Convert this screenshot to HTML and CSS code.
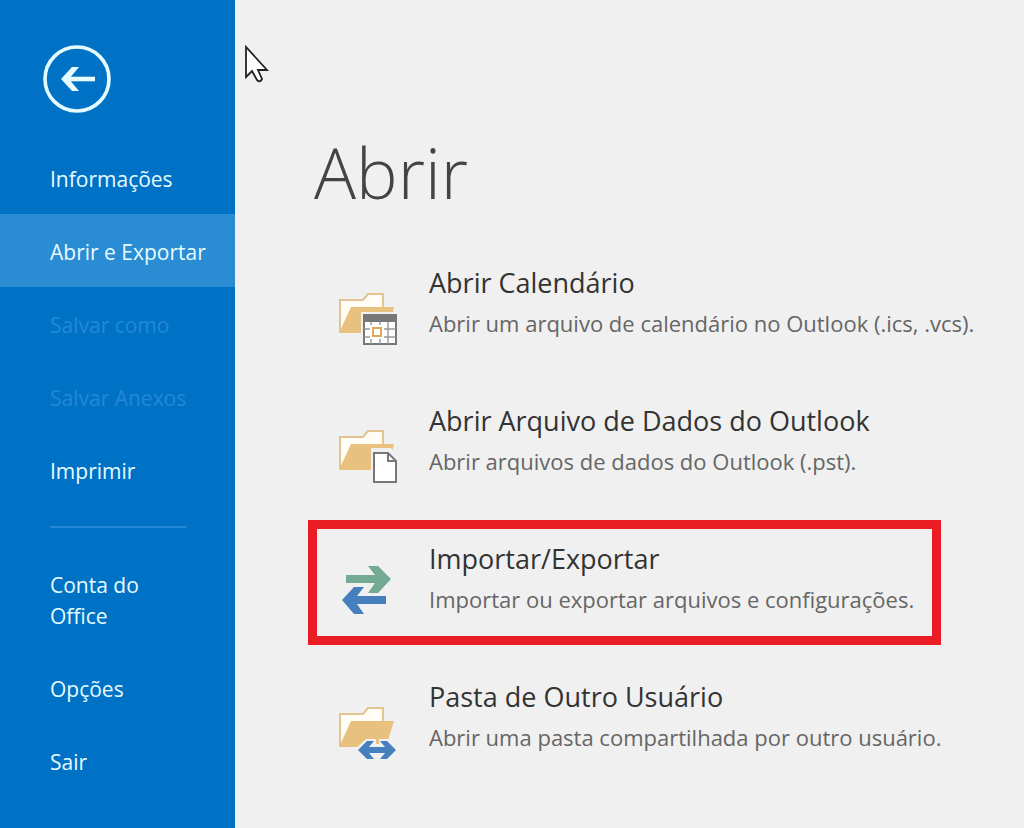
FILE: index.html
```html
<!DOCTYPE html>
<html lang="pt-BR">
<head>
  <meta charset="UTF-8">
  <meta name="viewport" content="width=device-width, initial-scale=1.0">
  <title>Abrir</title>
  <link rel="stylesheet" href="styles.css">
</head>
<body>
  <div class="backstage">
    <!-- Sidebar -->
    <nav class="sidebar">
      <button type="button" class="back" aria-label="Voltar">
        <svg width="68" height="68" viewBox="0 0 68 68" fill="none" stroke="#e6fbff">
          <circle cx="34" cy="34" r="32" stroke-width="3.6"/>
          <path d="M21 34H52" stroke-width="4.6"/>
          <path d="M18 34L29 22H36L26 34L36 46H29Z" fill="#e6fbff" stroke="none"/>
        </svg>
      </button>
      <a href="#" class="nav-item">Informações</a>
      <a href="#" class="nav-item active">Abrir e Exportar</a>
      <a href="#" class="nav-item disabled" aria-disabled="true">Salvar como</a>
      <a href="#" class="nav-item disabled" aria-disabled="true">Salvar Anexos</a>
      <a href="#" class="nav-item">Imprimir</a>
      <hr class="divider">
      <a href="#" class="nav-item">Conta do<br>Office</a>
      <a href="#" class="nav-item">Opções</a>
      <a href="#" class="nav-item">Sair</a>
    </nav>

    <!-- Open options -->
    <main class="content">
      <h1>Abrir</h1>
      <div class="options">
        <button type="button" class="option">
          <svg class="icon" width="60" height="56" viewBox="0 0 60 56">
            <path d="M2 42V10H25L30 4H45V17" fill="#fffdf6" stroke="#e3c592" stroke-width="2"/>
            <path d="M1 43L13 17H56L50 43Z" fill="#e8c17f"/>
            <path d="M23 22H60V56H23Z" fill="#f0f0f0"/>
            <path d="M26 25H58V54H26Z" fill="#fff" stroke="#777" stroke-width="2"/>
            <path d="M25 24H59V32H25Z" fill="#777"/>
            <path d="M33 32V54M42 32V54M50 32V54M26 39H58M26 47H58" stroke="#999" stroke-width="1.4"/>
            <path d="M32 35H46V49H32Z" fill="#fff"/>
            <path d="M35 38H43V46H35Z" fill="#fff" stroke="#dca95a" stroke-width="2"/>
          </svg>
          <span class="text">
            <span class="title">Abrir Calendário</span>
            <span class="desc">Abrir um arquivo de calendário no Outlook (.ics, .vcs).</span>
          </span>
        </button>
        <button type="button" class="option">
          <svg class="icon" width="60" height="56" viewBox="0 0 60 56">
            <path d="M2 41V9H25L30 3H45V16" fill="#fffdf6" stroke="#e3c592" stroke-width="2"/>
            <path d="M1 42L13 16H56L50 42Z" fill="#e8c17f"/>
            <path d="M33 20H53L60 27V56H33Z" fill="#f0f0f0"/>
            <path d="M36 25H50L58 33V54H36Z" fill="#fff" stroke="#777" stroke-width="2"/>
            <path d="M50 25V33H58" fill="none" stroke="#777" stroke-width="2"/>
          </svg>
          <span class="text">
            <span class="title">Abrir Arquivo de Dados do Outlook</span>
            <span class="desc">Abrir arquivos de dados do Outlook (.pst).</span>
          </span>
        </button>
        <button type="button" class="option selected">
          <svg class="icon" width="60" height="56" viewBox="0 0 60 56">
            <path d="M8 9H37L30 0H40L53 13L40 27H30L37 17H8Z" fill="#74aa93"/>
            <path d="M48 30H19L26 21H16L4 34L16 48H26L19 38H48Z" fill="#467fbe"/>
          </svg>
          <span class="text">
            <span class="title">Importar/Exportar</span>
            <span class="desc">Importar ou exportar arquivos e configurações.</span>
          </span>
        </button>
        <button type="button" class="option">
          <svg class="icon" width="60" height="56" viewBox="0 0 60 56">
            <path d="M2 42V10H25L30 4H45V17" fill="#fffdf6" stroke="#e3c592" stroke-width="2"/>
            <path d="M1 43L13 17H56L48 43Z" fill="#e8c17f"/>
            <path d="M16 46L28 35H38V40H41V35H50L60 46V56H16Z" fill="#f0f0f0"/>
            <path d="M20 46L29 37H36L31 43H47L42 37H49L58 46L49 55H42L47 49H31L36 55H29Z" fill="#467fbe"/>
          </svg>
          <span class="text">
            <span class="title">Pasta de Outro Usuário</span>
            <span class="desc">Abrir uma pasta compartilhada por outro usuário.</span>
          </span>
        </button>
      </div>
    </main>
  </div>

  <svg class="pointer" width="26" height="40" viewBox="0 0 26 40" aria-hidden="true">
    <path d="M2 2V32L8 26L13 35Q16 38 18 34L14 25H23Z" fill="#fff" stroke="#222" stroke-width="1.8"/>
  </svg>
</body>
</html>
```

FILE: styles.css
```css
* {
  box-sizing: border-box;
}

body {
  margin: 0;
  font-family: "Open Sans", "Noto Sans", sans-serif;
  background-color: #f0f0f0;
  color: #333;
}

button {
  font-family: inherit;
  color: inherit;
  background: none;
  border: none;
  padding: 0;
  text-align: left;
  cursor: pointer;
}

.backstage {
  display: flex;
  min-height: 100vh;
}

/* Sidebar */
.sidebar {
  flex: 0 0 235px;
  background-color: #0072c6;
  padding-top: 45px;
}

.back {
  display: block;
  margin: 0 0 28px 43px;
}

.back svg {
  display: block;
}

.nav-item {
  display: block;
  padding: 23px 0 19px 50px;
  font-size: 21px;
  font-weight: 500;
  line-height: 31px;
  color: #e6fbff;
  text-decoration: none;
  white-space: nowrap;
}

.nav-item.active {
  background-color: #2a8dd4;
}

.nav-item.disabled {
  color: #2488d6;
}

.divider {
  height: 2px;
  margin: 20px 49px 19px 50px;
  border: none;
  background-color: #2488d6;
}

/* Content */
.content {
  flex: 1;
  padding: 122px 12px 45px 73px;
}

h1 {
  margin: 0 0 22px 6px;
  font-size: 70px;
  line-height: 100px;
  font-weight: 300;
  color: #444;
}

.options {
  display: flex;
  flex-direction: column;
  align-items: flex-start;
  gap: 13px;
}

.option {
  display: flex;
  gap: 31px;
  padding: 10px 18px 14px 21px;
  border: 9px solid transparent;
}

.option.selected {
  border-color: #ea1c24;
}

.icon {
  flex: none;
  margin-top: 27px;
}

.text {
  white-space: nowrap;
}

.title,
.desc {
  display: block;
}

.title {
  font-size: 27px;
  line-height: 40px;
}

.desc {
  font-size: 22px;
  line-height: 40px;
  color: #666;
}

/* Mouse pointer over the page */
.pointer {
  position: absolute;
  left: 244px;
  top: 45px;
}
```
